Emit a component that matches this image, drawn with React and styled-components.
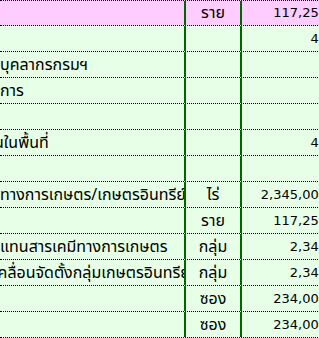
import React from "react";
import styled, { createGlobalStyle } from "styled-components";

const GlobalStyle = createGlobalStyle`
	html, body {
		margin: 0;
		padding: 0;
		overflow: hidden;
		background: #e6ffe6;
	}
`;

const Viewport = styled.div`
	width: 319px;
	height: 338px;
	overflow: hidden;
	background: #e6ffe6;
`;

const Sheet = styled.div`
	width: 340px;
	font-family: Tahoma, "Noto Sans Thai", "Liberation Sans", sans-serif;
	color: #000;
`;

const Row = styled.div`
	display: grid;
	grid-template-columns: 184px 58px 1fr;
	height: 26px;
	box-sizing: border-box;
	border-bottom: 1px dotted #000;
	background: ${({ $pink }) => ($pink ? "#ffccff" : "#e6ffe6")};

	&:first-child {
		border-top: 1px dotted #000;
	}
`;

const Label = styled.div`
	display: flex;
	align-items: flex-end;
	overflow: hidden;
	white-space: nowrap;
	font-size: 16px;
	line-height: 20px;
	padding-bottom: 2px;

	span {
		margin-left: ${({ $shift }) => $shift || 0}px;
	}
`;

const Unit = styled.div`
	display: flex;
	align-items: flex-end;
	justify-content: center;
	box-sizing: border-box;
	border-left: 2px solid #006600;
	border-right: 2px solid #006600;
	font-size: 16px;
	line-height: 20px;
	padding-bottom: 2px;
	white-space: nowrap;
`;

const Amount = styled.div`
	display: flex;
	align-items: flex-end;
	justify-content: flex-end;
	padding-right: 13px;
	padding-bottom: 4px;
	font-family: "DejaVu Sans", Verdana, sans-serif;
	font-size: 13px;
	line-height: 16px;
	white-space: nowrap;
`;

const rows = [
	{ pink: true, label: "", unit: "ราย", amount: "117,250" },
	{ label: "", unit: "", amount: "45" },
	{ label: "บุคลากรกรมฯ", unit: "", amount: "" },
	{ label: "การ", unit: "", amount: "" },
	{ label: "", unit: "", amount: "" },
	{ label: "นในพื้นที่", shift: -6, unit: "", amount: "45" },
	{ label: "", unit: "", amount: "" },
	{ label: "ทางการเกษตร/เกษตรอินทรีย์", unit: "ไร่", amount: "2,345,000" },
	{ label: "", unit: "ราย", amount: "117,250" },
	{ label: "แทนสารเคมีทางการเกษตร", unit: "กลุ่ม", amount: "2,345" },
	{ label: "เคลื่อนจัดตั้งกลุ่มเกษตรอินทรีย์", shift: -7, unit: "กลุ่ม", amount: "2,345" },
	{ label: "", unit: "ซอง", amount: "234,000" },
	{ label: "", unit: "ซอง", amount: "234,000" },
];

export default function App() {
	return (
		<Viewport>
			<GlobalStyle />
			<Sheet>
				{rows.map((r, i) => (
					<Row key={i} $pink={r.pink}>
						<Label $shift={r.shift}>
							<span>{r.label}</span>
						</Label>
						<Unit>{r.unit}</Unit>
						<Amount>{r.amount}</Amount>
					</Row>
				))}
			</Sheet>
		</Viewport>
	);
}
